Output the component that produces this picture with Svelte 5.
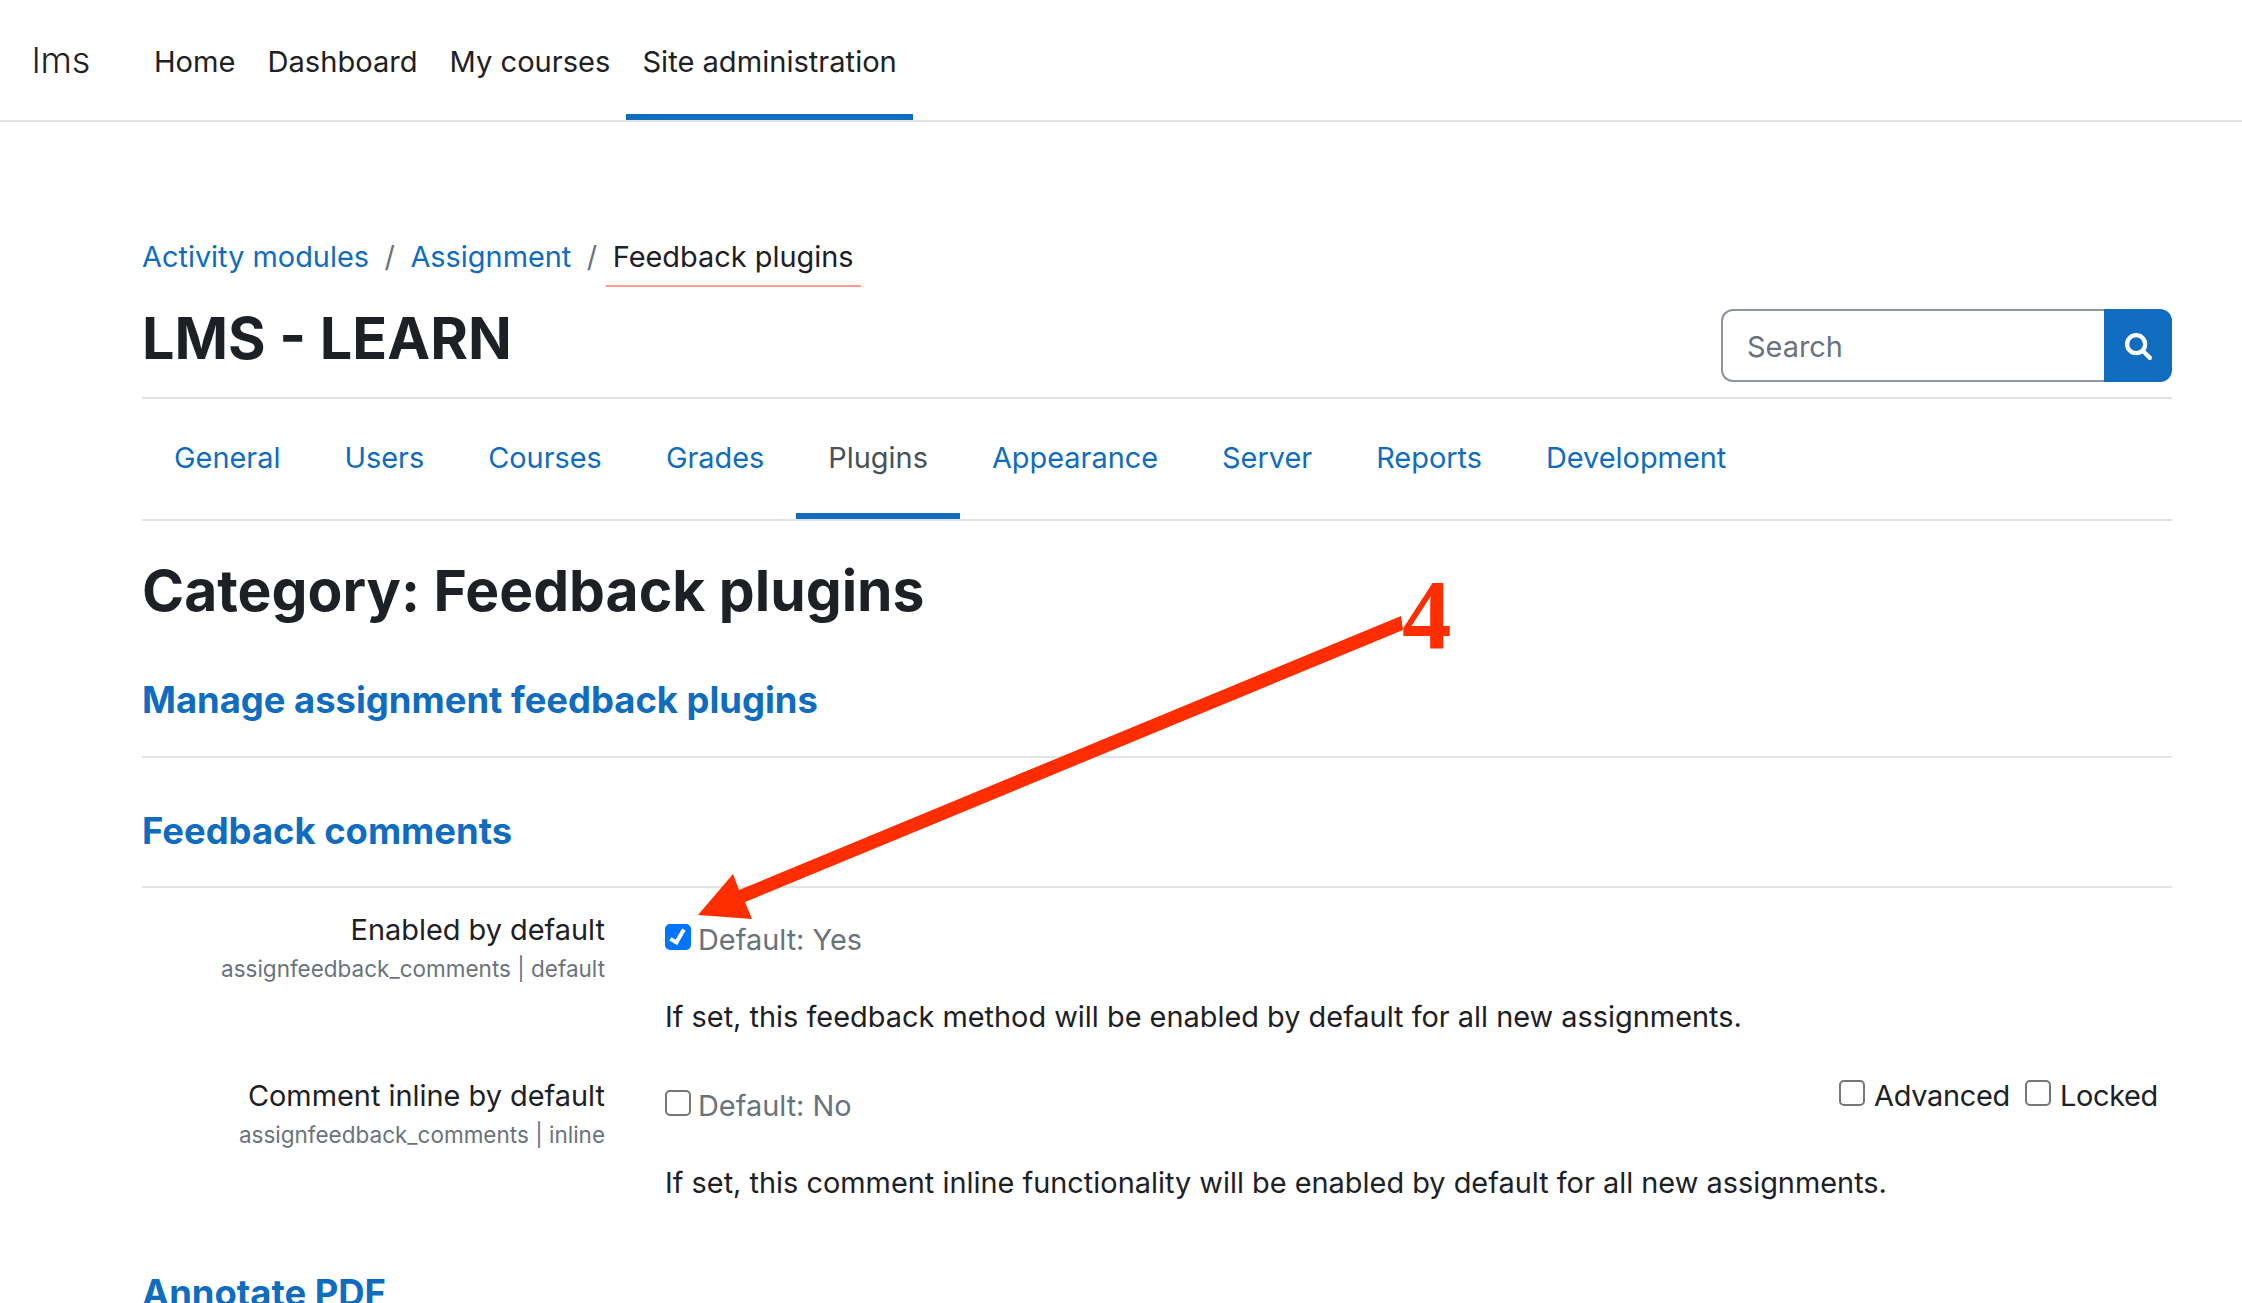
<script>
  const navItems = ["Home", "Dashboard", "My courses", "Site administration"];
  const tabs = ["General", "Users", "Courses", "Grades", "Plugins", "Appearance", "Server", "Reports", "Development"];
</script>

<div class="page">
  <header class="navbar">
    <span class="brand">lms</span>
    <nav class="primary">
      {#each navItems as item}
        <a href="#top" class:active={item === "Site administration"}>{item}</a>
      {/each}
    </nav>
  </header>

  <main class="content">
    <ol class="breadcrumb">
      <li><a href="#top">Activity modules</a></li>
      <li class="sep">/</li>
      <li><a href="#top">Assignment</a></li>
      <li class="sep">/</li>
      <li class="current">Feedback plugins</li>
    </ol>

    <div class="head">
      <h1>LMS - LEARN</h1>
      <form class="search">
        <input type="text" placeholder="Search" />
        <button type="button" aria-label="Search">
          <svg viewBox="0 0 24 24" width="30" height="30" fill="none" stroke="#fff">
            <circle cx="10.5" cy="10.5" r="7.2" stroke-width="3.4" />
            <path d="M16 16l5.5 5.5" stroke-width="3.4" stroke-linecap="round" />
          </svg>
        </button>
      </form>
    </div>

    <nav class="tabs">
      {#each tabs as tab}
        <a href="#top" class:active={tab === "Plugins"}>{tab}</a>
      {/each}
    </nav>

    <h2>Category: Feedback plugins</h2>

    <h3 class="section"><a href="#top">Manage assignment feedback plugins</a></h3>
    <h3 class="section"><a href="#top">Feedback comments</a></h3>

    <div class="setting first">
      <div class="label">
        <div class="name">Enabled by default</div>
        <div class="key">assignfeedback_comments | default</div>
      </div>
      <div class="field">
        <div class="control">
          <label class="check"><input type="checkbox" checked /><span class="dflt">Default: Yes</span></label>
        </div>
        <p>If set, this feedback method will be enabled by default for all new assignments.</p>
      </div>
    </div>

    <div class="setting">
      <div class="label">
        <div class="name">Comment inline by default</div>
        <div class="key">assignfeedback_comments | inline</div>
      </div>
      <div class="field">
        <div class="control">
          <label class="check"><input type="checkbox" /><span class="dflt">Default: No</span></label>
          <div class="flags">
            <label><input type="checkbox" />Advanced</label>
            <label><input type="checkbox" />Locked</label>
          </div>
        </div>
        <p>If set, this comment inline functionality will be enabled by default for all new assignments.</p>
      </div>
    </div>

    <h3 class="section last"><a href="#top">Annotate PDF</a></h3>
  </main>

  <!-- annotation drawn on top of the screenshot -->
  <svg class="arrow" viewBox="0 0 2242 1303" width="2242" height="1303">
    <polygon fill="#ff2d00" points="1401,616 1403,630 745,902 752,919 698,915 733,874 739,890" />
  </svg>
  <span class="step">4</span>
</div>

<style>
  :global(body) {
    margin: 0;
    background: #fff;
  }

  .page {
    position: relative;
    height: 1303px;
    overflow: hidden;
    font-family: Inter, "Noto Sans", sans-serif;
    font-size: 28.9px;
    color: #1d2125;
  }

  a {
    color: #0f6cbf;
    text-decoration: none;
  }

  .navbar {
    display: flex;
    align-items: stretch;
    height: 120px;
    border-bottom: 2px solid #dee2e6;
  }

  .brand {
    align-self: center;
    margin-left: 32px;
    width: 106px;
    font-size: 36px;
    font-weight: 300;
  }

  .primary {
    display: flex;
  }

  .primary a {
    display: flex;
    align-items: center;
    padding: 8px 16px 0;
    color: #1d2125;
    font-size: 29.1px;
    border-bottom: 6px solid transparent;
    box-sizing: border-box;
  }

  .primary a.active {
    border-bottom-color: #0f6cbf;
  }

  .content {
    padding: 113px 70px 0 142px;
  }

  .breadcrumb {
    display: flex;
    align-items: center;
    list-style: none;
    margin: 0;
    padding: 0;
    height: 42px;
  }

  .sep {
    margin: 0 15.5px;
    color: #6a737b;
  }

  .current {
    position: relative;
    margin-left: -7px;
    padding: 0 7px;
  }

  .current::after {
    content: "";
    position: absolute;
    left: 0;
    right: 0;
    bottom: -13px;
    height: 2px;
    background: #ff9a8c;
  }

  .head {
    display: flex;
    justify-content: space-between;
    height: 120px;
    border-bottom: 2px solid #dee2e6;
  }

  h1 {
    margin: 27px 0 0;
    font-size: 57.5px;
    line-height: 68px;
    font-weight: 700;
  }

  .search {
    display: flex;
    width: 451px;
    height: 73px;
    margin-top: 32px;
  }

  .search input {
    flex: 1;
    min-width: 0;
    box-sizing: border-box;
    padding: 2px 24px 0;
    border: 2px solid #8f959e;
    border-right: 0;
    border-radius: 12px 0 0 12px;
    font: inherit;
    outline: none;
  }

  .search input::placeholder {
    color: #6a737b;
  }

  .search button {
    display: flex;
    align-items: center;
    justify-content: center;
    width: 68px;
    padding: 0;
    border: 0;
    border-radius: 0 12px 12px 0;
    background: #0f6cbf;
  }

  .tabs {
    display: flex;
    height: 120px;
    border-bottom: 2px solid #dee2e6;
  }

  .tabs a {
    display: flex;
    align-items: center;
    box-sizing: border-box;
    padding: 2px 32px 0;
    border-bottom: 6px solid transparent;
  }

  .tabs a.active {
    color: #495057;
    border-bottom-color: #0f6cbf;
  }

  h2 {
    margin: 32px 0 0;
    font-size: 57px;
    line-height: 76px;
    font-weight: 700;
  }

  .section {
    margin: 0;
    padding: 46px 0 31px;
    font-size: 36.4px;
    line-height: 50px;
    font-weight: 700;
    border-bottom: 2px solid #e3e4e6;
  }

  .section + .section {
    padding: 48px 0 30px;
  }

  .section.last {
    border-bottom: 0;
    padding-top: 24px;
  }

  .setting {
    display: grid;
    grid-template-columns: 463px 1fr;
    gap: 60px;
    height: 166px;
  }

  .setting.first {
    padding-top: 24px;
  }

  .label {
    text-align: right;
  }

  .name {
    line-height: 36px;
  }

  .key {
    margin-top: 6px;
    font-size: 22.5px;
    line-height: 30px;
    color: #6a737b;
  }

  .control {
    display: flex;
    justify-content: space-between;
    padding-right: 14px;
  }

  .check {
    display: flex;
    align-items: flex-start;
    padding-top: 10px;
  }

  .dflt {
    margin-left: 7px;
    color: #6a737b;
    line-height: 36px;
  }

  input[type="checkbox"] {
    appearance: none;
    position: relative;
    box-sizing: border-box;
    width: 26px;
    height: 26px;
    margin: 2px 0 0;
    flex: none;
    background: #fff;
    border: 2px solid #767676;
    border-radius: 5px;
  }

  input[type="checkbox"]:checked {
    background: #0075ff;
    border-color: #0075ff;
  }

  input[type="checkbox"]:checked::after {
    content: "";
    position: absolute;
    left: 6px;
    top: 1px;
    width: 5px;
    height: 13px;
    border: solid #fff;
    border-width: 0 4px 4px 0;
    transform: rotate(30deg);
  }

  .flags {
    display: flex;
    gap: 15px;
    letter-spacing: -0.3px;
  }

  .flags label {
    display: flex;
    align-items: flex-start;
    gap: 9px;
    line-height: 36px;
  }

  .flags input[type="checkbox"] {
    margin-top: 2px;
  }

  .field p {
    margin: 41px 0 0;
    line-height: 36px;
  }

  .arrow {
    position: absolute;
    top: 0;
    left: 0;
    pointer-events: none;
  }

  .step {
    position: absolute;
    left: 1402px;
    top: 558px;
    font-family: "Liberation Serif", serif;
    font-size: 99px;
    line-height: 114px;
    font-weight: 700;
    color: #ff2d00;
  }
</style>
